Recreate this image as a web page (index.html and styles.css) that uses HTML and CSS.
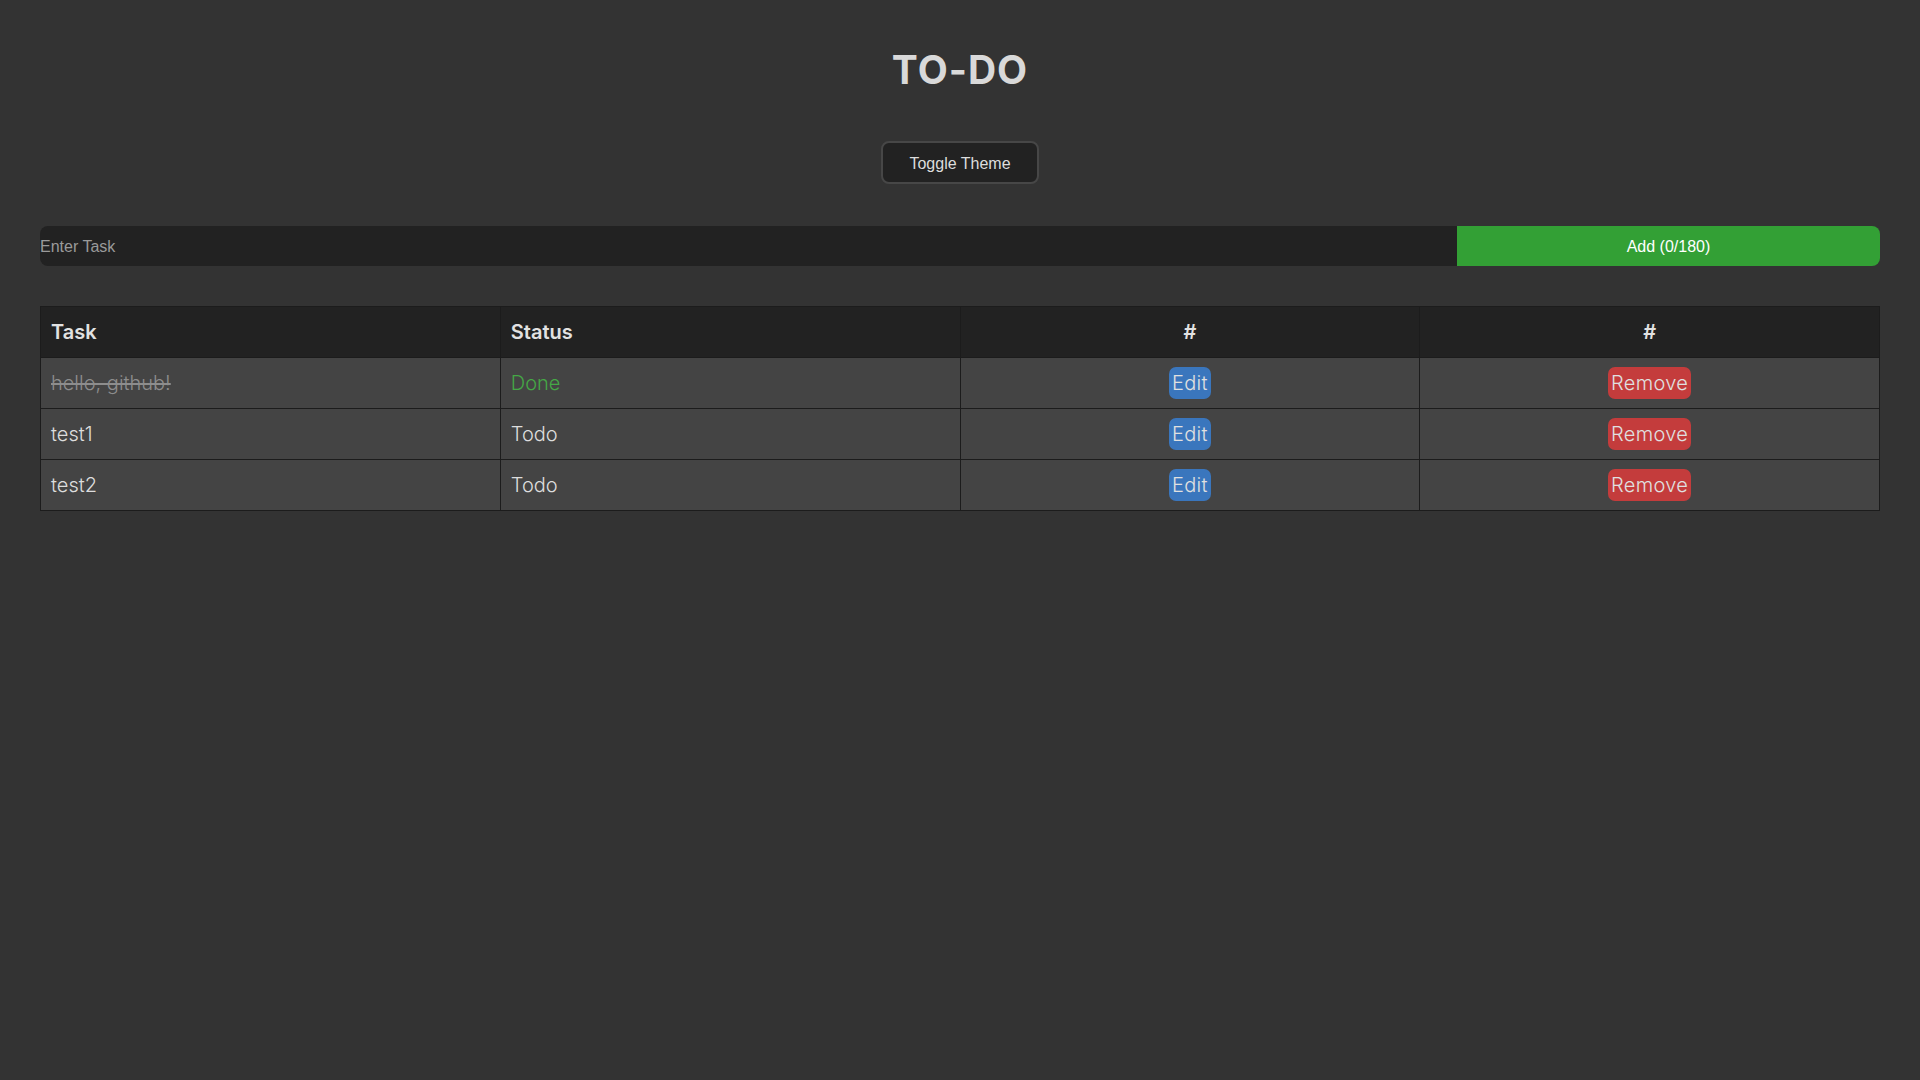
FILE: index.html
```html
<!DOCTYPE html>
<html lang="en">
<head>
<meta charset="utf-8">
<title>TO-DO</title>
<link rel="stylesheet" href="styles.css">
</head>
<body>
<main class="app">
  <h1 class="title">TO-DO</h1>
  <div class="theme-row">
    <button class="toggle-btn">Toggle Theme</button>
  </div>
  <form class="task-form">
    <input class="task-input" type="text" placeholder="Enter Task">
    <button class="add-btn" type="button">Add (0/180)</button>
  </form>
  <table class="tasks">
    <thead>
      <tr>
        <th class="left">Task</th>
        <th class="left">Status</th>
        <th>#</th>
        <th>#</th>
      </tr>
    </thead>
    <tbody>
      <tr>
        <td class="left done-task">hello, github!</td>
        <td class="left status-done">Done</td>
        <td><button class="pill edit">Edit</button></td>
        <td><button class="pill remove">Remove</button></td>
      </tr>
      <tr>
        <td class="left">test1</td>
        <td class="left">Todo</td>
        <td><button class="pill edit">Edit</button></td>
        <td><button class="pill remove">Remove</button></td>
      </tr>
      <tr>
        <td class="left">test2</td>
        <td class="left">Todo</td>
        <td><button class="pill edit">Edit</button></td>
        <td><button class="pill remove">Remove</button></td>
      </tr>
    </tbody>
  </table>
</main>
</body>
</html>
```

FILE: styles.css
```css
html, body {
  margin: 0;
  padding: 0;
  background: #333333;
  height: 100%;
}
body {
  font-family: "Inter", "Open Sans", sans-serif;
  color: #dcdcdc;
}
.app {
  padding: 0 40px;
}
.title {
  margin: 0;
  padding-top: 46px;
  height: 48px;
  line-height: 48px;
  text-align: center;
  font-size: 39px;
  font-weight: 700;
  color: #d9d9d9;
  letter-spacing: 1px;
}
.theme-row {
  display: flex;
  justify-content: center;
  margin-top: 47px;
}
.toggle-btn {
  width: 158px;
  height: 43px;
  background: #222222;
  border: 2px solid #474747;
  border-radius: 8px;
  color: #dddddd;
  font-family: "Liberation Sans", Arial, sans-serif;
  font-size: 16px;
  padding: 3px 0 0;
}
.task-form {
  display: flex;
  margin: 42px 0 0;
  height: 40px;
}
.task-input {
  flex: 1 1 auto;
  min-width: 0;
  background: #222222;
  border: none;
  border-radius: 8px 0 0 8px;
  padding: 2px 0 0;
  color: #dddddd;
  font-family: "Liberation Sans", Arial, sans-serif;
  font-size: 16px;
  outline: none;
}
.task-input::placeholder {
  color: #9a9a9a;
}
.add-btn {
  flex: 0 0 423px;
  background: #33a035;
  border: none;
  border-radius: 0 8px 8px 0;
  color: #ffffff;
  font-family: "Liberation Sans", Arial, sans-serif;
  font-size: 16px;
  padding: 2px 0 0;
}
.tasks {
  margin-top: 40px;
  width: 100%;
  border-collapse: collapse;
  table-layout: fixed;
  border: 1px solid #1c1c1c;
}
.tasks th, .tasks td {
  border: 1px solid #1c1c1c;
  height: 50px;
  padding: 0 10px;
  text-align: center;
  font-size: 20px;
}
.tasks th {
  background: #222222;
  font-weight: 600;
  color: #e2e2e2;
}
.tasks td {
  background: #444444;
  font-weight: 300;
  color: #dddddd;
}
.tasks .left {
  text-align: left;
}
.done-task {
  text-decoration: line-through;
}
.tasks td.done-task {
  color: #8d8d8d;
}
.tasks td.status-done {
  color: #45a846;
}
.pill {
  font-family: "Inter", "Open Sans", sans-serif;
  font-size: 20px;
  font-weight: 300;
  color: #e0e0e0;
  border: none;
  border-radius: 7px;
  height: 32px;
  padding: 0 3px;
  line-height: 32px;
  vertical-align: middle;
  letter-spacing: 0.3px;
}
.edit {
  background: #3a76bd;
}
.remove {
  background: #c43c3c;
}
```
